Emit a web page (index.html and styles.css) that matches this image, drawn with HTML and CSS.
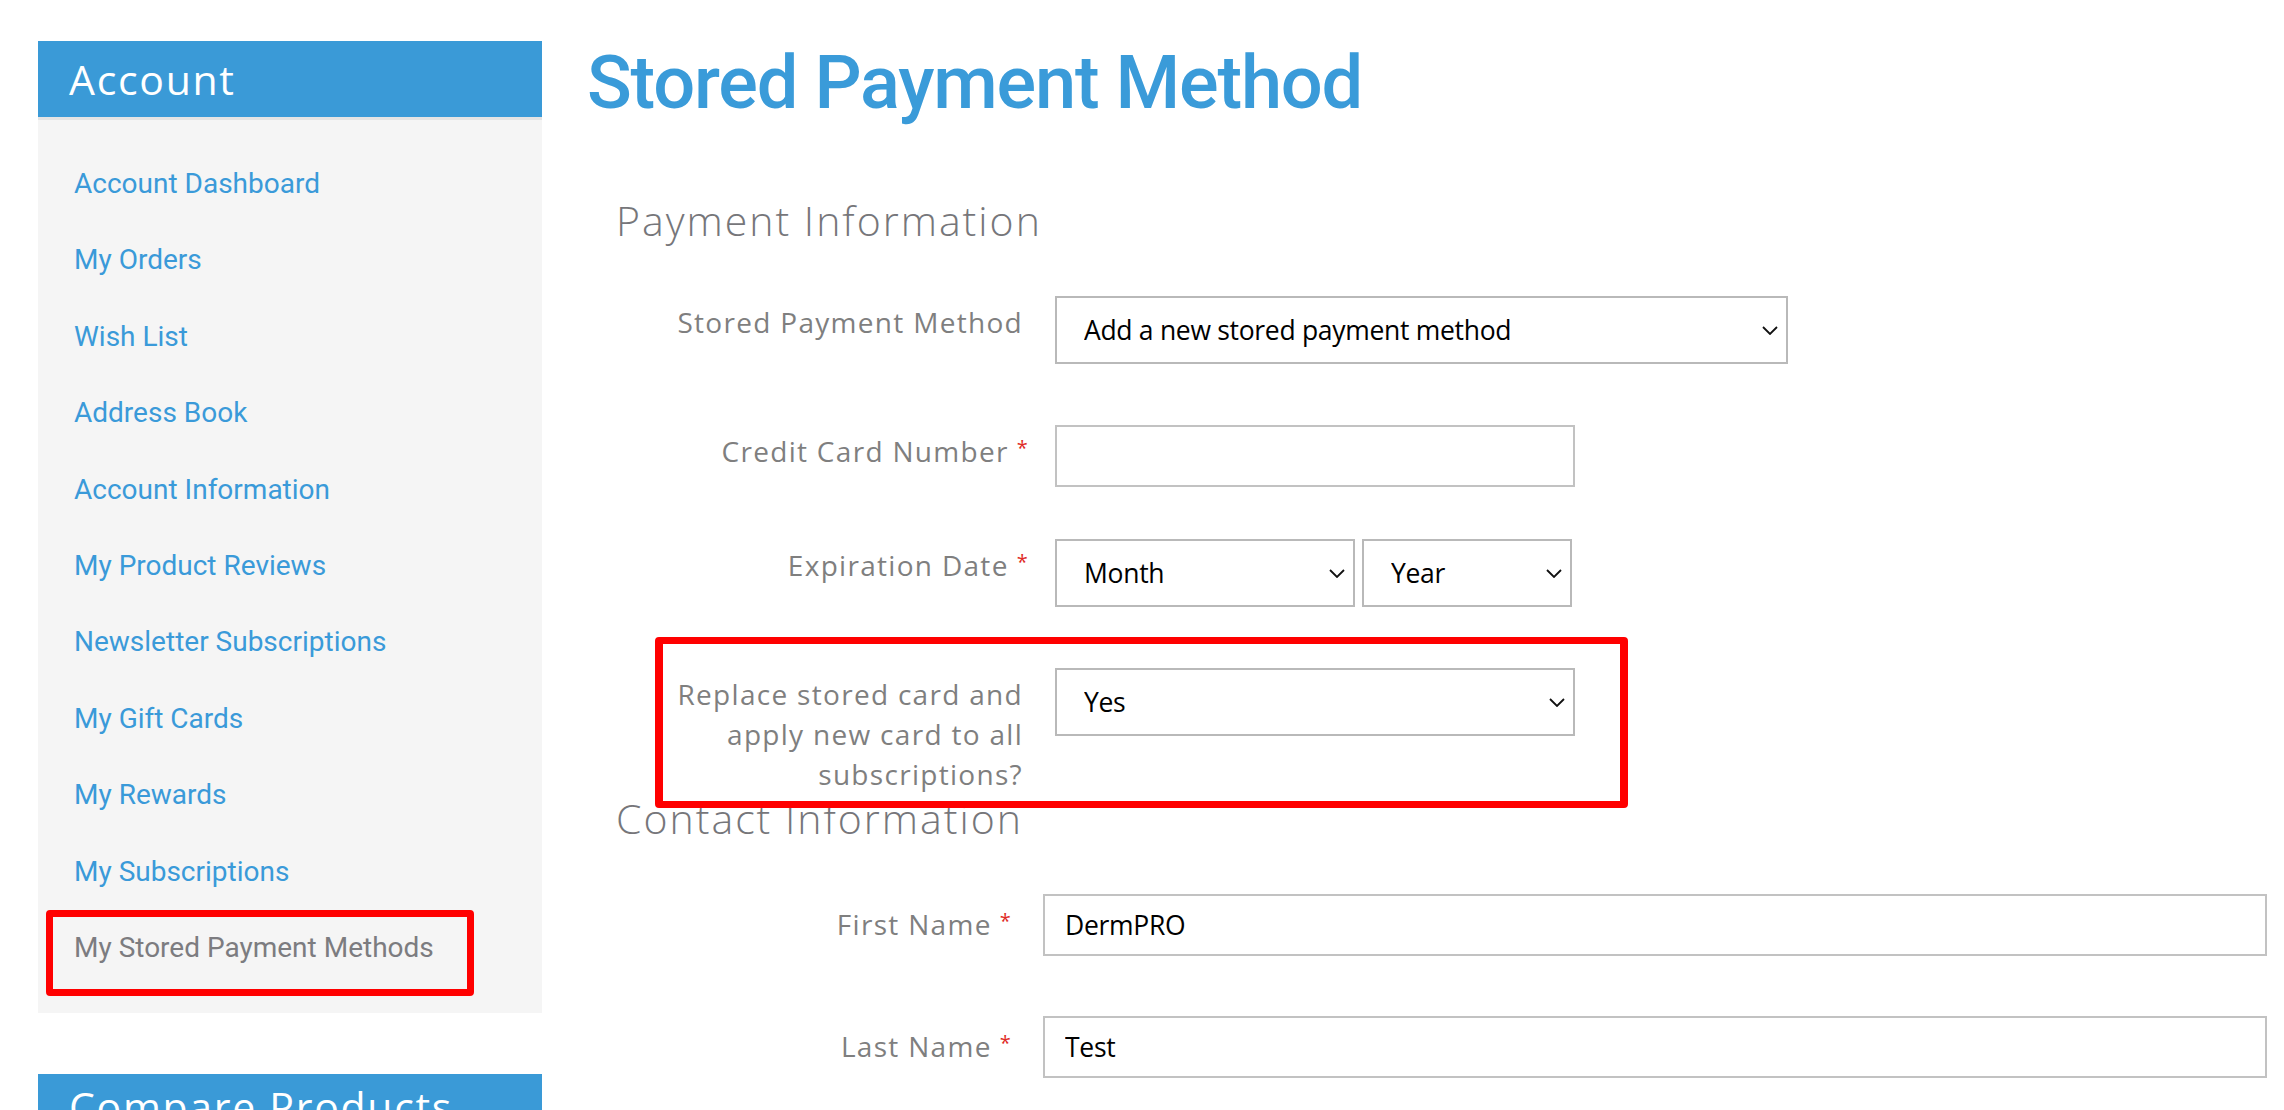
FILE: index.html
```html
<!DOCTYPE html>
<html lang="en">
<head>
<meta charset="utf-8">
<title>Stored Payment Method</title>
<link rel="stylesheet" href="styles.css">
</head>
<body>
<div class="page">
  <aside class="sidebar">
    <div class="block">
      <div class="block-title">Account</div>
      <ul class="nav">
        <li class="nav-item"><a href="#">Account Dashboard</a></li>
        <li class="nav-item"><a href="#">My Orders</a></li>
        <li class="nav-item"><a href="#">Wish List</a></li>
        <li class="nav-item"><a href="#">Address Book</a></li>
        <li class="nav-item"><a href="#">Account Information</a></li>
        <li class="nav-item"><a href="#">My Product Reviews</a></li>
        <li class="nav-item"><a href="#">Newsletter Subscriptions</a></li>
        <li class="nav-item"><a href="#">My Gift Cards</a></li>
        <li class="nav-item"><a href="#">My Rewards</a></li>
        <li class="nav-item"><a href="#">My Subscriptions</a></li>
        <li class="nav-item current"><strong>My Stored Payment Methods</strong><span class="highlight highlight-nav"></span></li>
      </ul>
    </div>
    <div class="block block-compare">
      <div class="block-title compare-title">Compare Products</div>
    </div>
  </aside>

  <main class="main">
    <h1 class="page-title">Stored Payment Method</h1>

    <form class="form">
      <fieldset class="fieldset payment">
        <div class="legend">Payment Information</div>

        <div class="field gap-lg">
          <label class="label">Stored Payment Method</label>
          <div class="control">
            <div class="select-wrap w-method">
              <select class="select"><option>Add a new stored payment method</option></select>
              <svg class="chev" viewBox="0 0 16 9" width="16" height="9"><polyline points="1,1 8,8 15,1" fill="none" stroke="#111" stroke-width="1.8"/></svg>
            </div>
          </div>
        </div>

        <div class="field">
          <label class="label required">Credit Card Number</label>
          <div class="control">
            <input class="input w-card" type="text" value="">
          </div>
        </div>

        <div class="field gap-lg">
          <label class="label required">Expiration Date</label>
          <div class="control date">
            <div class="select-wrap w-month">
              <select class="select"><option>Month</option></select>
              <svg class="chev" viewBox="0 0 16 9" width="16" height="9"><polyline points="1,1 8,8 15,1" fill="none" stroke="#111" stroke-width="1.8"/></svg>
            </div>
            <div class="select-wrap w-year">
              <select class="select"><option>Year</option></select>
              <svg class="chev" viewBox="0 0 16 9" width="16" height="9"><polyline points="1,1 8,8 15,1" fill="none" stroke="#111" stroke-width="1.8"/></svg>
            </div>
          </div>
        </div>

        <div class="field last">
          <label class="label">Replace stored card and<br>apply new card to all<br>subscriptions?</label>
          <div class="control">
            <div class="select-wrap w-card">
              <select class="select"><option>Yes</option></select>
              <svg class="chev" viewBox="0 0 16 9" width="16" height="9"><polyline points="1,1 8,8 15,1" fill="none" stroke="#111" stroke-width="1.8"/></svg>
            </div>
          </div>
          <span class="highlight highlight-field"></span>
        </div>
      </fieldset>

      <fieldset class="fieldset contact">
        <div class="legend">Contact Information</div>
        <div class="field">
          <label class="label required">First Name</label>
          <div class="control grow">
            <input class="input full" type="text" value="DermPRO">
          </div>
        </div>
        <div class="field">
          <label class="label required">Last Name</label>
          <div class="control grow">
            <input class="input full" type="text" value="Test">
          </div>
        </div>
      </fieldset>
    </form>
  </main>
</div>
</body>
</html>
```

FILE: styles.css
```css
* { box-sizing: border-box; }

html, body {
  margin: 0;
  padding: 0;
  background: #ffffff;
  overflow: hidden;
}

body {
  width: 2284px;
  height: 1110px;
  font-family: "Open Sans", "Liberation Sans", sans-serif;
}

.page {
  display: flex;
  align-items: flex-start;
  padding: 41px 17px 0 38px;
}

/* ---------- sidebar ---------- */
.sidebar {
  width: 504px;
  flex: 0 0 504px;
}

.block-title {
  background: #3a9ad7;
  color: #ffffff;
  height: 76px;
  line-height: 76px;
  padding-left: 31px;
  font-family: "Open Sans", sans-serif;
  font-size: 41px;
  font-weight: 400;
  letter-spacing: 1.7px;
  border-bottom: 3px solid #e4e4e4;
  box-sizing: content-box;
}

.nav {
  list-style: none;
  margin: 0;
  padding: 26px 0 27px;
  background: #f5f5f5;
}

.nav-item {
  position: relative;
  height: 76.4px;
  line-height: 76.4px;
  padding-left: 36px;
  font-family: Roboto, "Liberation Sans", sans-serif;
  font-size: 28px;
}

.nav-item a {
  color: #3a9ad9;
  text-decoration: none;
}

.nav-item.current strong {
  font-weight: 400;
  color: #7c7c80;
}

.block-compare {
  margin-top: 61px;
}

.compare-title {
  height: 64px;
  line-height: 64px;
  border-bottom: 0;
}

/* ---------- annotations ---------- */
.highlight {
  position: absolute;
  border: 7px solid #ff0000;
  border-radius: 4px;
  pointer-events: none;
}

.highlight-nav {
  left: 8px;
  top: 0;
  width: 428px;
  height: 86px;
}

.highlight-field {
  left: 37px;
  top: -31px;
  width: 973px;
  height: 171px;
  border-width: 7px 8px;
}

/* ---------- main ---------- */
.main {
  flex: 1;
  margin-left: 45px;
}

.page-title {
  margin: 0;
  font-family: Roboto, "Liberation Sans", sans-serif;
  font-size: 74px;
  font-weight: 500;
  line-height: 84px;
  letter-spacing: -1.2px;
  color: #3a9bd9;
}

.form {
  margin: 71px 0 0 0;
}

.fieldset {
  border: 0;
  margin: 0;
  padding: 0 0 0 31px;
  min-width: 0;
}

.legend {
  font-family: "Open Sans", sans-serif;
  font-weight: 300;
  font-size: 41px;
  line-height: 48px;
  letter-spacing: 2px;
  color: #76767a;
  margin: 0 0 52px -2px;
}

.field {
  position: relative;
  display: flex;
  align-items: flex-start;
  margin-bottom: 52px;
}

.field.gap-lg { margin-bottom: 61px; }
.field.last { margin-bottom: 0; }

.label {
  flex: 0 0 437px;
  text-align: right;
  padding: 6px 26px 0 0;
  font-family: "Open Sans", sans-serif;
  font-size: 28px;
  line-height: 40px;
  letter-spacing: 1.3px;
  color: #7f7f7f;
}

.label.required::after {
  content: "*";
  color: #e02b27;
  font-size: 20px;
  margin-left: 8px;
  vertical-align: top;
  position: relative;
  top: -3px;
}

.payment .label:not(.required) {
  padding-right: 32px;
}

.contact .label {
  flex-basis: 425px;
  padding: 10px 31px 0 0;
}

.contact .field { margin-bottom: 60px; }

.control { display: flex; }
.control.grow { flex: 1; }
.control.date { gap: 7px; }

.select-wrap {
  position: relative;
  height: 68px;
}

.w-method { width: 733px; }
.w-card { width: 520px; }
.w-month { width: 300px; }
.w-year { width: 210px; }

.select {
  -webkit-appearance: none;
  appearance: none;
  width: 100%;
  height: 100%;
  margin: 0;
  border: 2px solid #b9b9b9;
  border-radius: 0;
  background: #ffffff;
  padding: 0 40px 0 27px;
  font-family: "Open Sans", sans-serif;
  font-size: 26.5px;
  letter-spacing: -0.3px;
  color: #000000;
}

.chev {
  position: absolute;
  right: 10px;
  top: 30px;
  display: block;
}

.input {
  height: 62px;
  margin: 0;
  border: 2px solid #c2c2c2;
  border-radius: 0;
  padding: 0 20px;
  font-family: "Open Sans", sans-serif;
  font-size: 26.5px;
  letter-spacing: -0.3px;
  color: #000000;
  background: #ffffff;
}

.input.w-card { width: 520px; }
.input.full { width: 100%; }
```
